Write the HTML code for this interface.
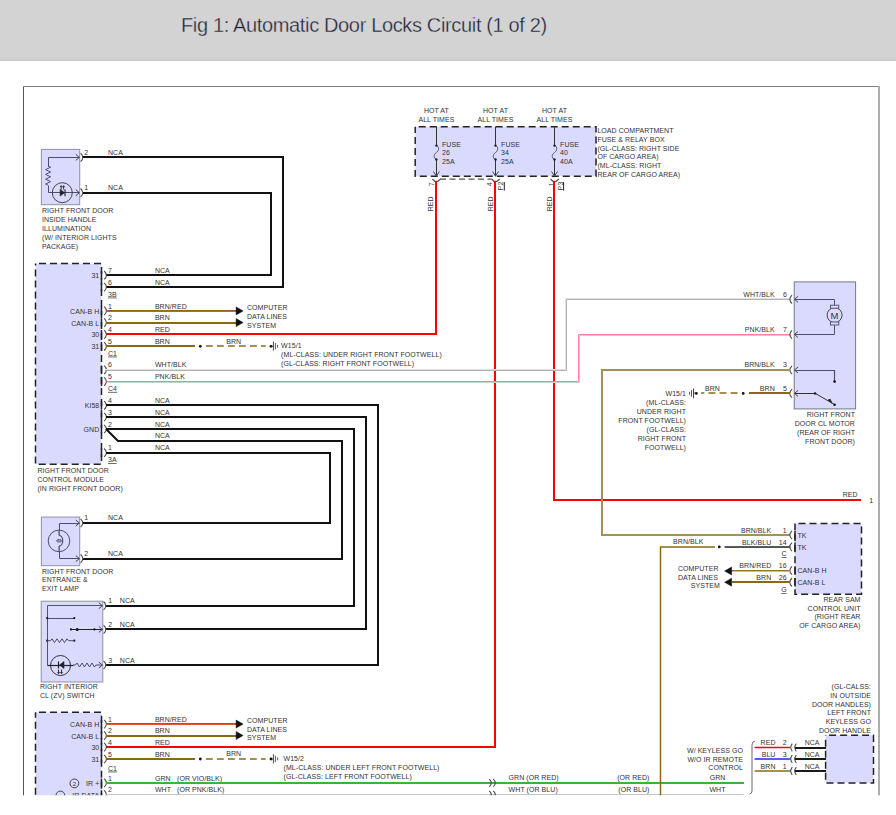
<!DOCTYPE html>
<html><head><meta charset="utf-8"><style>
html,body{margin:0;padding:0;background:#fff;width:896px;height:815px;overflow:hidden}
#hdr{position:absolute;left:0;top:0;width:896px;height:60.5px;background:#d3d3d3}
#ttl{position:absolute;left:181px;top:11px;font-family:"Liberation Sans",sans-serif;font-size:20px;letter-spacing:-0.35px;color:#22223a;-webkit-text-stroke:0.35px #d3d3d3;white-space:nowrap;line-height:28px}
svg{position:absolute;left:0;top:0}
svg text{font-family:"Liberation Sans",sans-serif;letter-spacing:0.06px}
</style></head><body>
<div id="hdr"></div><div style="position:absolute;left:0;top:57px;width:896px;height:1px;background:#cfcfcf"></div><div style="position:absolute;left:0;top:59px;width:896px;height:1.5px;background:#cbcbcb"></div>
<div id="ttl">Fig 1: Automatic Door Locks Circuit (1 of 2)</div>
<svg width="896" height="815" viewBox="0 0 896 815">
<path d="M23.5,800.5 L23.5,86.5" stroke="#555" stroke-width="1" fill="none"/>
<path d="M23.5,86.5 L879.5,86.5" stroke="#808080" stroke-width="1" fill="none"/>
<path d="M879,86 L879,800" stroke="#adadad" stroke-width="2" fill="none"/>
<rect x="415.2" y="126.8" width="180.8" height="49.5" fill="#dadaff" stroke="#222" stroke-width="1.5" stroke-dasharray="7 4" stroke-dashoffset="7.5"/>
<text x="436.4" y="113" text-anchor="middle" font-size="7" fill="#333333">HOT AT</text>
<text x="436.4" y="121.9" text-anchor="middle" font-size="7" fill="#333333">ALL TIMES</text>
<path d="M436.5,126.5 L436.5,145.5" stroke="#333" stroke-width="1" fill="none"/>
<path d="M436.4,145.6 C439.4,146.6 439.4,150.6 436.4,152.5 C433.4,154.4 433.4,158.4 436.4,159.4" stroke="#555" stroke-width="1" fill="none"/>
<path d="M436.5,159.5 L436.5,176.5" stroke="#333" stroke-width="1" fill="none"/>
<circle cx="436.4" cy="145.6" r="1.2" fill="#222"/>
<circle cx="436.4" cy="159.4" r="1.2" fill="#222"/>
<path d="M433.4,171.5 L436.4,176 L439.4,171.5" stroke="#444" stroke-width="1" fill="none"/>
<text x="442" y="147" font-size="7" fill="#333333">FUSE</text>
<text x="442" y="155.4" font-size="7" fill="#333333">26</text>
<text x="442" y="163.8" font-size="7" fill="#333333">25A</text>
<text x="495.5" y="113" text-anchor="middle" font-size="7" fill="#333333">HOT AT</text>
<text x="495.5" y="121.9" text-anchor="middle" font-size="7" fill="#333333">ALL TIMES</text>
<path d="M495.5,126.5 L495.5,145.5" stroke="#333" stroke-width="1" fill="none"/>
<path d="M495.5,145.6 C498.5,146.6 498.5,150.6 495.5,152.5 C492.5,154.4 492.5,158.4 495.5,159.4" stroke="#555" stroke-width="1" fill="none"/>
<path d="M495.5,159.5 L495.5,176.5" stroke="#333" stroke-width="1" fill="none"/>
<circle cx="495.5" cy="145.6" r="1.2" fill="#222"/>
<circle cx="495.5" cy="159.4" r="1.2" fill="#222"/>
<path d="M492.5,171.5 L495.5,176 L498.5,171.5" stroke="#444" stroke-width="1" fill="none"/>
<text x="501.1" y="147" font-size="7" fill="#333333">FUSE</text>
<text x="501.1" y="155.4" font-size="7" fill="#333333">34</text>
<text x="501.1" y="163.8" font-size="7" fill="#333333">25A</text>
<text x="554.5" y="113" text-anchor="middle" font-size="7" fill="#333333">HOT AT</text>
<text x="554.5" y="121.9" text-anchor="middle" font-size="7" fill="#333333">ALL TIMES</text>
<path d="M554.5,126.5 L554.5,145.5" stroke="#333" stroke-width="1" fill="none"/>
<path d="M554.5,145.6 C557.5,146.6 557.5,150.6 554.5,152.5 C551.5,154.4 551.5,158.4 554.5,159.4" stroke="#555" stroke-width="1" fill="none"/>
<path d="M554.5,159.5 L554.5,176.5" stroke="#333" stroke-width="1" fill="none"/>
<circle cx="554.5" cy="145.6" r="1.2" fill="#222"/>
<circle cx="554.5" cy="159.4" r="1.2" fill="#222"/>
<path d="M551.5,171.5 L554.5,176 L557.5,171.5" stroke="#444" stroke-width="1" fill="none"/>
<text x="560.1" y="147" font-size="7" fill="#333333">FUSE</text>
<text x="560.1" y="155.4" font-size="7" fill="#333333">40</text>
<text x="560.1" y="163.8" font-size="7" fill="#333333">40A</text>
<text x="597.4" y="133" font-size="7" fill="#333333">LOAD COMPARTMENT</text>
<text x="597.4" y="141.75" font-size="7" fill="#333333">FUSE &amp; RELAY BOX</text>
<text x="597.4" y="150.5" font-size="7" fill="#333333">(GL-CLASS: RIGHT SIDE</text>
<text x="597.4" y="159.25" font-size="7" fill="#333333">OF CARGO AREA)</text>
<text x="597.4" y="168" font-size="7" fill="#333333">(ML-CLASS: RIGHT</text>
<text x="597.4" y="176.75" font-size="7" fill="#333333">REAR OF CARGO AREA)</text>
<path d="M432.4,179 L434.9,181.3 L437.9,181.3 L440.7,179" stroke="#555" stroke-width="1.2" fill="none"/>
<path d="M491.5,179 L494.0,181.3 L497.0,181.3 L499.8,179" stroke="#555" stroke-width="1.2" fill="none"/>
<path d="M550.5,179 L553.0,181.3 L556.0,181.3 L558.8,179" stroke="#555" stroke-width="1.2" fill="none"/>
<path d="M440,179.1 L491.5,179.1" stroke="#555" stroke-width="1.4" fill="none" stroke-dasharray="6 3.5"/>
<text x="0" y="0" text-anchor="middle" font-size="7" fill="#333333" transform="translate(434.09999999999997,184.2) rotate(-90)">7</text>
<text x="0" y="0" text-anchor="middle" font-size="7" fill="#333333" transform="translate(491.9,184.2) rotate(-90)">4</text>
<text x="0" y="0" text-anchor="middle" font-size="7" fill="#333333" transform="translate(553.5,184.2) rotate(-90)">1</text>
<text x="0" y="0" text-anchor="middle" font-size="7" fill="#333333" transform="translate(433.2,203.8) rotate(-90)">RED</text>
<text x="0" y="0" text-anchor="middle" font-size="7" fill="#333333" transform="translate(492.5,203.8) rotate(-90)">RED</text>
<text x="0" y="0" text-anchor="middle" font-size="7" fill="#333333" transform="translate(551.6,203.8) rotate(-90)">RED</text>
<text x="0" y="0" text-anchor="middle" font-size="7" fill="#333333" transform="translate(503.4,185.8) rotate(-90)">P2</text>
<path d="M504.3,182 L504.3,190.6" stroke="#222" stroke-width="1" fill="none"/>
<text x="0" y="0" text-anchor="middle" font-size="7" fill="#333333" transform="translate(562.6999999999999,185.8) rotate(-90)">P3</text>
<path d="M563.6,182 L563.6,190.6" stroke="#222" stroke-width="1" fill="none"/>
<path d="M436,181 L436,334 L106,334" stroke="#ff0000" stroke-width="2" fill="none"/>
<path d="M495,181 L495,747 L106,747" stroke="#ff0000" stroke-width="2" fill="none"/>
<path d="M554,181 L554,500 L861,500" stroke="#ff0000" stroke-width="2" fill="none"/>
<text x="857.6" y="497.3" text-anchor="end" font-size="7" fill="#333333">RED</text>
<text x="869.2" y="502.8" font-size="7" fill="#333333">1</text>
<rect x="41.4" y="149.4" width="38.3" height="55.3" fill="#dadaff" stroke="#9090a8" stroke-width="1"/>
<path d="M79.5,157.5 L48.5,157.5 L48.5,166.5" stroke="#4d4d70" stroke-width="1" fill="none"/>
<path d="M48,166 L50.6,167.2 L45.6,169.6 L50.6,172.0 L45.6,174.4 L50.6,176.8 L45.6,179.2 L50.6,181.6 L45.6,184.0 L48,185.2" stroke="#4d4d70" stroke-width="1" fill="none"/>
<path d="M48.5,185.5 L48.5,192.5 L79.5,192.5" stroke="#4d4d70" stroke-width="1" fill="none"/>
<path d="M75.8,154.4 L79.3,157.4 L75.8,160.4" stroke="#444" stroke-width="1" fill="none"/>
<path d="M75.8,189.7 L79.3,192.7 L75.8,195.7" stroke="#444" stroke-width="1" fill="none"/>
<circle cx="62.3" cy="192.7" r="10" fill="none" stroke="#444" stroke-width="1"/>
<path d="M60.1,189.3 L60.1,196.1 L64.6,192.7 Z" stroke="#222" stroke-width="0.6" fill="#222"/>
<path d="M65,189.2 L65,196.2" stroke="#222" stroke-width="1.1" fill="none"/>
<path d="M61.2,189.5 L61.2,185.8" stroke="#222" stroke-width="0.9" fill="none"/>
<path d="M63.6,189.5 L63.6,185.8" stroke="#222" stroke-width="0.9" fill="none"/>
<path d="M60.1,187.2 L61.2,185.6 L62.3,187.2 M62.5,187.2 L63.6,185.6 L64.7,187.2" stroke="#222" stroke-width="0.8" fill="none"/>
<path d="M80.6,153.2 Q85,157.4 80.6,161.6" stroke="#4a4a4a" stroke-width="1.1" fill="none"/>
<path d="M80.6,188.5 Q85,192.7 80.6,196.9" stroke="#4a4a4a" stroke-width="1.1" fill="none"/>
<text x="84.2" y="154.6" font-size="7" fill="#333333">2</text>
<text x="84.2" y="189.9" font-size="7" fill="#333333">1</text>
<text x="108" y="154.6" font-size="7" fill="#333333">NCA</text>
<text x="108" y="189.9" font-size="7" fill="#333333">NCA</text>
<path d="M83,157 L283,157 L283,287 L106,287" stroke="#111111" stroke-width="2" fill="none"/>
<path d="M83,193 L271,193 L271,275 L106,275" stroke="#111111" stroke-width="2" fill="none"/>
<text x="42" y="212.8" font-size="7" fill="#333333">RIGHT FRONT DOOR</text>
<text x="42" y="221.8" font-size="7" fill="#333333">INSIDE HANDLE</text>
<text x="42" y="230.8" font-size="7" fill="#333333">ILLUMINATION</text>
<text x="42" y="239.8" font-size="7" fill="#333333">(W/ INTERIOR LIGHTS</text>
<text x="42" y="248.8" font-size="7" fill="#333333">PACKAGE)</text>
<rect x="35.5" y="263.5" width="66" height="200.7" fill="#dadaff" stroke="#222" stroke-width="1.5" stroke-dasharray="7 4" stroke-dashoffset="7.5"/>
<text x="37.4" y="473" font-size="7" fill="#333333">RIGHT FRONT DOOR</text>
<text x="37.4" y="482" font-size="7" fill="#333333">CONTROL MODULE</text>
<text x="37.4" y="491" font-size="7" fill="#333333">(IN RIGHT FRONT DOOR)</text>
<path d="M104.2,271 Q108.6,275.2 104.2,279.4" stroke="#4a4a4a" stroke-width="1.1" fill="none"/>
<path d="M101.5,270.9 L101.5,279.5" stroke="#222" stroke-width="1.5" fill="none"/>
<text x="108" y="272.8" font-size="7" fill="#333333">7</text>
<text x="154.9" y="272.8" font-size="7" fill="#333333">NCA</text>
<text x="99.3" y="278.2" text-anchor="end" font-size="7" fill="#333333">31</text>
<path d="M104.2,282.9 Q108.6,287.1 104.2,291.3" stroke="#4a4a4a" stroke-width="1.1" fill="none"/>
<path d="M101.5,282.8 L101.5,291.4" stroke="#222" stroke-width="1.5" fill="none"/>
<text x="108" y="284.7" font-size="7" fill="#333333">6</text>
<text x="154.9" y="284.7" font-size="7" fill="#333333">NCA</text>
<path d="M104.2,306.7 Q108.6,310.9 104.2,315.1" stroke="#4a4a4a" stroke-width="1.1" fill="none"/>
<path d="M101.5,306.6 L101.5,315.2" stroke="#222" stroke-width="1.5" fill="none"/>
<text x="108" y="308.5" font-size="7" fill="#333333">1</text>
<text x="154.9" y="308.5" font-size="7" fill="#333333">BRN/RED</text>
<text x="99.3" y="313.9" text-anchor="end" font-size="7" fill="#333333">CAN-B H</text>
<path d="M104.2,318.4 Q108.6,322.6 104.2,326.8" stroke="#4a4a4a" stroke-width="1.1" fill="none"/>
<path d="M101.5,318.3 L101.5,326.9" stroke="#222" stroke-width="1.5" fill="none"/>
<text x="108" y="320.2" font-size="7" fill="#333333">2</text>
<text x="154.9" y="320.2" font-size="7" fill="#333333">BRN</text>
<text x="99.3" y="325.6" text-anchor="end" font-size="7" fill="#333333">CAN-B L</text>
<path d="M104.2,330.2 Q108.6,334.4 104.2,338.6" stroke="#4a4a4a" stroke-width="1.1" fill="none"/>
<path d="M101.5,330.1 L101.5,338.7" stroke="#222" stroke-width="1.5" fill="none"/>
<text x="108" y="332" font-size="7" fill="#333333">4</text>
<text x="154.9" y="332" font-size="7" fill="#333333">RED</text>
<text x="99.3" y="337.4" text-anchor="end" font-size="7" fill="#333333">30</text>
<path d="M104.2,342.1 Q108.6,346.3 104.2,350.5" stroke="#4a4a4a" stroke-width="1.1" fill="none"/>
<path d="M101.5,342 L101.5,350.6" stroke="#222" stroke-width="1.5" fill="none"/>
<text x="108" y="343.9" font-size="7" fill="#333333">5</text>
<text x="154.9" y="343.9" font-size="7" fill="#333333">BRN</text>
<text x="99.3" y="349.3" text-anchor="end" font-size="7" fill="#333333">31</text>
<path d="M104.2,365.6 Q108.6,369.8 104.2,374" stroke="#4a4a4a" stroke-width="1.1" fill="none"/>
<path d="M101.5,365.5 L101.5,374.1" stroke="#222" stroke-width="1.5" fill="none"/>
<text x="108" y="367.4" font-size="7" fill="#333333">6</text>
<text x="154.9" y="367.4" font-size="7" fill="#333333">WHT/BLK</text>
<path d="M104.2,377.4 Q108.6,381.6 104.2,385.8" stroke="#4a4a4a" stroke-width="1.1" fill="none"/>
<path d="M101.5,377.3 L101.5,385.9" stroke="#222" stroke-width="1.5" fill="none"/>
<text x="108" y="379.2" font-size="7" fill="#333333">5</text>
<text x="154.9" y="379.2" font-size="7" fill="#333333">PNK/BLK</text>
<path d="M104.2,401.1 Q108.6,405.3 104.2,409.5" stroke="#4a4a4a" stroke-width="1.1" fill="none"/>
<path d="M101.5,401 L101.5,409.6" stroke="#222" stroke-width="1.5" fill="none"/>
<text x="108" y="402.9" font-size="7" fill="#333333">4</text>
<text x="154.9" y="402.9" font-size="7" fill="#333333">NCA</text>
<text x="99.3" y="408.3" text-anchor="end" font-size="7" fill="#333333">KI58</text>
<path d="M104.2,412.8 Q108.6,417 104.2,421.2" stroke="#4a4a4a" stroke-width="1.1" fill="none"/>
<path d="M101.5,412.7 L101.5,421.3" stroke="#222" stroke-width="1.5" fill="none"/>
<text x="108" y="414.6" font-size="7" fill="#333333">3</text>
<text x="154.9" y="414.6" font-size="7" fill="#333333">NCA</text>
<path d="M104.2,424.8 Q108.6,429 104.2,433.2" stroke="#4a4a4a" stroke-width="1.1" fill="none"/>
<path d="M101.5,424.7 L101.5,433.3" stroke="#222" stroke-width="1.5" fill="none"/>
<text x="108" y="426.6" font-size="7" fill="#333333">2</text>
<text x="154.9" y="426.6" font-size="7" fill="#333333">NCA</text>
<text x="99.3" y="432" text-anchor="end" font-size="7" fill="#333333">GND</text>
<text x="154.9" y="438.4" font-size="7" fill="#333333">NCA</text>
<path d="M104.2,448.5 Q108.6,452.7 104.2,456.9" stroke="#4a4a4a" stroke-width="1.1" fill="none"/>
<path d="M101.5,448.4 L101.5,457" stroke="#222" stroke-width="1.5" fill="none"/>
<text x="108" y="450.3" font-size="7" fill="#333333">1</text>
<text x="154.9" y="450.3" font-size="7" fill="#333333">NCA</text>
<text x="108" y="296.6" font-size="7" fill="#333333" text-decoration="underline">3B</text>
<text x="108" y="355.6" font-size="7" fill="#333333" text-decoration="underline">C1</text>
<text x="108" y="390.9" font-size="7" fill="#333333" text-decoration="underline">C4</text>
<text x="108" y="462.1" font-size="7" fill="#333333" text-decoration="underline">3A</text>
<rect x="106.5" y="310" width="130.5" height="1" fill="#8b6914"/>
<rect x="106.5" y="311" width="130.5" height="1" fill="#e8502a"/>
<path d="M236.1,306.9 L243.1,310.9 L236.1,314.9 Z" stroke="#111111" stroke-width="0.5" fill="#111111"/>
<path d="M106,323 L237,323" stroke="#8b6914" stroke-width="2" fill="none"/>
<path d="M236.1,318.6 L243.1,322.6 L236.1,326.6 Z" stroke="#111111" stroke-width="0.5" fill="#111111"/>
<text x="247" y="309.6" font-size="7" fill="#333333">COMPUTER</text>
<text x="247" y="318.7" font-size="7" fill="#333333">DATA LINES</text>
<text x="247" y="327.8" font-size="7" fill="#333333">SYSTEM</text>
<path d="M106,346 L195,346" stroke="#8b6914" stroke-width="2" fill="none"/>
<circle cx="200.3" cy="346.3" r="1.4" fill="#111111"/>
<path d="M206,346 L265.7,346" stroke="#8b6914" stroke-width="1.6" fill="none" stroke-dasharray="6.8 4.2"/>
<circle cx="271" cy="346.3" r="1.4" fill="#111111"/>
<path d="M271,346.3 L273.4,346.3" stroke="#333" stroke-width="0.8" fill="none"/>
<path d="M273.4,341.6 L273.4,350.7" stroke="#333" stroke-width="0.9" fill="none"/>
<path d="M275.4,343 L275.4,349.4" stroke="#444" stroke-width="0.9" fill="none"/>
<path d="M277.6,344.8 L277.6,347.6" stroke="#444" stroke-width="0.9" fill="none"/>
<text x="226.2" y="343.7" font-size="7" fill="#333333">BRN</text>
<text x="281.1" y="348.4" font-size="7" fill="#333333">W15/1</text>
<text x="281.1" y="357.4" font-size="7" fill="#333333">(ML-CLASS: UNDER RIGHT FRONT FOOTWELL)</text>
<text x="281.1" y="366.4" font-size="7" fill="#333333">(GL-CLASS: RIGHT FRONT FOOTWELL)</text>
<path d="M105.5,369.5 L565.5,369.5 L565.5,298.5 L789.5,298.5" stroke="#dedede" stroke-width="1" fill="none"/>
<path d="M106.5,370.5 L566.5,370.5 L566.5,299.5 L790.5,299.5" stroke="#b2b2b2" stroke-width="1" fill="none"/>
<path d="M107.5,382.5 L579.5,382.5 L579.5,335.5 L791.5,335.5" stroke="#c9d3cd" stroke-width="1" fill="none"/>
<path d="M106.5,381.5 L578.5,381.5 L578.5,334.5 L790.5,334.5" stroke="#ff7fa0" stroke-width="1" fill="none"/>
<path d="M106,405 L378,405 L378,665 L106,665" stroke="#111111" stroke-width="2" fill="none"/>
<path d="M106,417 L366,417 L366,629 L106,629" stroke="#111111" stroke-width="2" fill="none"/>
<path d="M106,429 L354,429 L354,606 L106,606" stroke="#111111" stroke-width="2" fill="none"/>
<path d="M106,429 L118,441 L342,441 L342,559 L83,559" stroke="#111111" stroke-width="2" fill="none"/>
<path d="M106,453 L330,453 L330,523 L83,523" stroke="#111111" stroke-width="2" fill="none"/>
<rect x="41.4" y="517.1" width="38.3" height="48.6" fill="#dadaff" stroke="#9090a8" stroke-width="1"/>
<path d="M79.5,523.5 L59.5,523.5 L59.5,530.5" stroke="#4d4d70" stroke-width="1" fill="none"/>
<path d="M59.5,551.5 L59.5,558.5 L79.5,558.5" stroke="#4d4d70" stroke-width="1" fill="none"/>
<path d="M59.1,530.2 L59.1,535.3" stroke="#4d4d70" stroke-width="1.3" fill="none"/>
<path d="M59.1,535.3 A3.6,5.4 0 0 1 59.1,546.1" stroke="#4d4d70" stroke-width="1.2" fill="none"/>
<path d="M59.1,546.1 L59.1,551.2" stroke="#4d4d70" stroke-width="1.3" fill="none"/>
<circle cx="59" cy="540.9" r="10.8" fill="none" stroke="#4d4d70" stroke-width="1"/>
<ellipse cx="59.1" cy="540.8" rx="2.6" ry="1.3" fill="#9a9ab0" stroke="#55557a" stroke-width="0.8"/>
<path d="M75.8,520 L79.3,523 L75.8,526" stroke="#444" stroke-width="1" fill="none"/>
<path d="M75.8,555.6 L79.3,558.6 L75.8,561.6" stroke="#444" stroke-width="1" fill="none"/>
<path d="M80.6,518.8 Q85,523 80.6,527.2" stroke="#4a4a4a" stroke-width="1.1" fill="none"/>
<path d="M80.6,554.4 Q85,558.6 80.6,562.8" stroke="#4a4a4a" stroke-width="1.1" fill="none"/>
<text x="84.2" y="520.3" font-size="7" fill="#333333">1</text>
<text x="84.2" y="555.9" font-size="7" fill="#333333">2</text>
<text x="108" y="520.3" font-size="7" fill="#333333">NCA</text>
<text x="108" y="555.9" font-size="7" fill="#333333">NCA</text>
<text x="42" y="573.8" font-size="7" fill="#333333">RIGHT FRONT DOOR</text>
<text x="42" y="582.4" font-size="7" fill="#333333">ENTRANCE &amp;</text>
<text x="42" y="591" font-size="7" fill="#333333">EXIT LAMP</text>
<rect x="41.2" y="601.2" width="61.6" height="80.8" fill="#dadaff" stroke="#9090a8" stroke-width="1"/>
<path d="M102.5,605.5 L47.5,605.5 L47.5,665.5" stroke="#555" stroke-width="1" fill="none"/>
<path d="M98.8,602.7 L102.3,605.7 L98.8,608.7" stroke="#444" stroke-width="1" fill="none"/>
<path d="M47.5,618.5 L74.5,618.5" stroke="#4d4d70" stroke-width="1" fill="none"/>
<circle cx="47.2" cy="618.1" r="1.1" fill="#111111"/>
<circle cx="74.3" cy="618.1" r="1.1" fill="#111111"/>
<path d="M71.5,629.5 L102.5,629.5" stroke="#222" stroke-width="1" fill="none"/>
<circle cx="71" cy="629.4" r="1.1" fill="#111111"/>
<circle cx="77.2" cy="629.4" r="1.5" fill="#111111"/>
<circle cx="94.4" cy="629.4" r="1.1" fill="#111111"/>
<path d="M98.8,626.4 L102.3,629.4 L98.8,632.4" stroke="#444" stroke-width="1" fill="none"/>
<circle cx="47.2" cy="640.7" r="1.1" fill="#111111"/>
<circle cx="74.3" cy="640.7" r="1.1" fill="#111111"/>
<path d="M47.2,640.7 L50.6,640.7 L52,638.8 L54.5,642.6 L57,638.8 L59.5,642.6 L62,638.8 L64.5,642.6 L67,638.8 L68.5,640.7 L74.3,640.7" stroke="#4d4d70" stroke-width="1" fill="none"/>
<circle cx="60.5" cy="665.5" r="10" fill="none" stroke="#333" stroke-width="1"/>
<path d="M47.5,665.5 L73.5,665.5" stroke="#222" stroke-width="1.2" fill="none"/>
<path d="M59.5,665 L64,661.5 L64,668.5 Z" stroke="#222" stroke-width="0.6" fill="#222"/>
<path d="M58.5,661.5 L58.5,668.5" stroke="#222" stroke-width="1.2" fill="none"/>
<path d="M58.5,669.5 L58.5,673.5" stroke="#222" stroke-width="0.9" fill="none"/>
<path d="M61.5,669.5 L61.5,673.5" stroke="#222" stroke-width="0.9" fill="none"/>
<path d="M57.4,672 L58.6,673.6 L59.8,672 M60.3,672 L61.5,673.6 L62.7,672" stroke="#222" stroke-width="0.8" fill="none"/>
<path d="M73,665 L75.5,665 L77,663 L79.5,667 L82,663 L84.5,667 L87,663 L89.5,667 L92,663 L94.5,667 L96,665 L102.3,665" stroke="#4d4d70" stroke-width="1" fill="none"/>
<path d="M98.8,662 L102.3,665 L98.8,668" stroke="#444" stroke-width="1" fill="none"/>
<path d="M103.6,601.5 Q108,605.7 103.6,609.9" stroke="#4a4a4a" stroke-width="1.1" fill="none"/>
<text x="108.2" y="603.3" font-size="7" fill="#333333">1</text>
<text x="119.8" y="603.3" font-size="7" fill="#333333">NCA</text>
<path d="M103.6,625.2 Q108,629.4 103.6,633.6" stroke="#4a4a4a" stroke-width="1.1" fill="none"/>
<text x="108.2" y="627" font-size="7" fill="#333333">2</text>
<text x="119.8" y="627" font-size="7" fill="#333333">NCA</text>
<path d="M103.6,660.8 Q108,665 103.6,669.2" stroke="#4a4a4a" stroke-width="1.1" fill="none"/>
<text x="108.2" y="662.6" font-size="7" fill="#333333">3</text>
<text x="119.8" y="662.6" font-size="7" fill="#333333">NCA</text>
<text x="40" y="688.8" font-size="7" fill="#333333">RIGHT INTERIOR</text>
<text x="40" y="698" font-size="7" fill="#333333">CL (ZV) SWITCH</text>
<rect x="35.5" y="712.3" width="66" height="120" fill="#dadaff" stroke="#222" stroke-width="1.5" stroke-dasharray="7 4" stroke-dashoffset="7.5"/>
<path d="M104.2,719.9 Q108.6,724.1 104.2,728.3" stroke="#4a4a4a" stroke-width="1.1" fill="none"/>
<path d="M101.5,719.8 L101.5,728.4" stroke="#222" stroke-width="1.5" fill="none"/>
<text x="108" y="721.7" font-size="7" fill="#333333">1</text>
<text x="154.9" y="721.7" font-size="7" fill="#333333">BRN/RED</text>
<text x="99.3" y="727.1" text-anchor="end" font-size="7" fill="#333333">CAN-B H</text>
<path d="M104.2,731.3 Q108.6,735.5 104.2,739.7" stroke="#4a4a4a" stroke-width="1.1" fill="none"/>
<path d="M101.5,731.2 L101.5,739.8" stroke="#222" stroke-width="1.5" fill="none"/>
<text x="108" y="733.1" font-size="7" fill="#333333">2</text>
<text x="154.9" y="733.1" font-size="7" fill="#333333">BRN</text>
<text x="99.3" y="738.5" text-anchor="end" font-size="7" fill="#333333">CAN-B L</text>
<path d="M104.2,742.9 Q108.6,747.1 104.2,751.3" stroke="#4a4a4a" stroke-width="1.1" fill="none"/>
<path d="M101.5,742.8 L101.5,751.4" stroke="#222" stroke-width="1.5" fill="none"/>
<text x="108" y="744.7" font-size="7" fill="#333333">4</text>
<text x="154.9" y="744.7" font-size="7" fill="#333333">RED</text>
<text x="99.3" y="750.1" text-anchor="end" font-size="7" fill="#333333">30</text>
<path d="M104.2,754.8 Q108.6,759 104.2,763.2" stroke="#4a4a4a" stroke-width="1.1" fill="none"/>
<path d="M101.5,754.7 L101.5,763.3" stroke="#222" stroke-width="1.5" fill="none"/>
<text x="108" y="756.6" font-size="7" fill="#333333">5</text>
<text x="154.9" y="756.6" font-size="7" fill="#333333">BRN</text>
<text x="99.3" y="762" text-anchor="end" font-size="7" fill="#333333">31</text>
<path d="M104.2,778.7 Q108.6,782.9 104.2,787.1" stroke="#4a4a4a" stroke-width="1.1" fill="none"/>
<path d="M101.5,778.6 L101.5,787.2" stroke="#222" stroke-width="1.5" fill="none"/>
<text x="108" y="780.5" font-size="7" fill="#333333">1</text>
<text x="154.9" y="780.5" font-size="7" fill="#333333">GRN</text>
<text x="99.3" y="785.9" text-anchor="end" font-size="7" fill="#333333">IR +</text>
<path d="M104.2,790.4 Q108.6,794.6 104.2,798.8" stroke="#4a4a4a" stroke-width="1.1" fill="none"/>
<path d="M101.5,790.3 L101.5,798.9" stroke="#222" stroke-width="1.5" fill="none"/>
<text x="108" y="792.2" font-size="7" fill="#333333">2</text>
<text x="154.9" y="792.2" font-size="7" fill="#333333">WHT</text>
<text x="99.3" y="797.6" text-anchor="end" font-size="7" fill="#333333">IR DATA</text>
<text x="108" y="770.6" font-size="7" fill="#333333" text-decoration="underline">C1</text>
<text x="177" y="780.5" font-size="7" fill="#333333">(OR VIO/BLK)</text>
<text x="177" y="792.2" font-size="7" fill="#333333">(OR PNK/BLK)</text>
<circle cx="74.4" cy="783.4" r="4.4" fill="none" stroke="#333" stroke-width="0.9"/>
<text x="74.4" y="785.6" text-anchor="middle" font-size="6" fill="#333333">2</text>
<circle cx="60.4" cy="795.5" r="4.4" fill="none" stroke="#333" stroke-width="0.9"/>
<rect x="106.5" y="723" width="130.5" height="1" fill="#8b6914"/>
<rect x="106.5" y="724" width="130.5" height="1" fill="#e8502a"/>
<path d="M236.1,720.1 L243.1,724.1 L236.1,728.1 Z" stroke="#111111" stroke-width="0.5" fill="#111111"/>
<path d="M106,736 L237,736" stroke="#8b6914" stroke-width="2" fill="none"/>
<path d="M236.1,731.5 L243.1,735.5 L236.1,739.5 Z" stroke="#111111" stroke-width="0.5" fill="#111111"/>
<text x="247" y="722.6" font-size="7" fill="#333333">COMPUTER</text>
<text x="247" y="731.5" font-size="7" fill="#333333">DATA LINES</text>
<text x="247" y="740.4" font-size="7" fill="#333333">SYSTEM</text>
<path d="M106,759 L195,759" stroke="#8b6914" stroke-width="2" fill="none"/>
<circle cx="200.3" cy="759" r="1.4" fill="#111111"/>
<path d="M206,759 L265.7,759" stroke="#8b6914" stroke-width="1.6" fill="none" stroke-dasharray="6.8 4.2"/>
<circle cx="271" cy="759" r="1.4" fill="#111111"/>
<path d="M271,759 L273.4,759" stroke="#333" stroke-width="0.8" fill="none"/>
<path d="M273.4,754.3 L273.4,763.4" stroke="#333" stroke-width="0.9" fill="none"/>
<path d="M275.4,755.7 L275.4,762.1" stroke="#444" stroke-width="0.9" fill="none"/>
<path d="M277.6,757.5 L277.6,760.3" stroke="#444" stroke-width="0.9" fill="none"/>
<text x="226.2" y="756.4" font-size="7" fill="#333333">BRN</text>
<text x="283.5" y="760.8" font-size="7" fill="#333333">W15/2</text>
<text x="283.5" y="769.8" font-size="7" fill="#333333">(ML-CLASS: UNDER LEFT FRONT FOOTWELL)</text>
<text x="283.5" y="778.8" font-size="7" fill="#333333">(GL-CLASS: LEFT FRONT FOOTWELL)</text>
<path d="M106,783 L744,783" stroke="#3db23a" stroke-width="2" fill="none"/>
<path d="M106.5,794.6 L743.7,794.6" stroke="#c8c8c8" stroke-width="1.4" fill="none"/>
<path d="M489.3,779.1 Q493.3,782.9 489.3,786.6999999999999" stroke="#4a4a4a" stroke-width="1.1" fill="none"/>
<path d="M493.3,779.1 Q497.3,782.9 493.3,786.6999999999999" stroke="#4a4a4a" stroke-width="1.1" fill="none"/>
<path d="M489.3,790.8000000000001 Q493.3,794.6 489.3,798.4" stroke="#4a4a4a" stroke-width="1.1" fill="none"/>
<path d="M493.3,790.8000000000001 Q497.3,794.6 493.3,798.4" stroke="#4a4a4a" stroke-width="1.1" fill="none"/>
<text x="508.6" y="780.3" font-size="7" fill="#333333">GRN (OR RED)</text>
<text x="508.6" y="792.2" font-size="7" fill="#333333">WHT (OR BLU)</text>
<text x="649.5" y="780.3" text-anchor="end" font-size="7" fill="#333333">(OR RED)</text>
<text x="649.5" y="792.2" text-anchor="end" font-size="7" fill="#333333">(OR BLU)</text>
<text x="717.5" y="780.3" text-anchor="middle" font-size="7" fill="#333333">GRN</text>
<text x="717.5" y="792.2" text-anchor="middle" font-size="7" fill="#333333">WHT</text>
<rect x="794.2" y="281.9" width="61.4" height="127" fill="#dadaff" stroke="#777788" stroke-width="1"/>
<path d="M792,295.1 Q787.6,299.3 792,303.5" stroke="#4a4a4a" stroke-width="1.1" fill="none"/>
<path d="M798,296.3 L794.5,299.3 L798,302.3" stroke="#444" stroke-width="1" fill="none"/>
<text x="774.8" y="296.7" text-anchor="end" font-size="7" fill="#333333">WHT/BLK</text>
<text x="783" y="296.7" font-size="7" fill="#333333">6</text>
<path d="M792,330.3 Q787.6,334.5 792,338.7" stroke="#4a4a4a" stroke-width="1.1" fill="none"/>
<path d="M798,331.5 L794.5,334.5 L798,337.5" stroke="#444" stroke-width="1" fill="none"/>
<text x="774.8" y="331.9" text-anchor="end" font-size="7" fill="#333333">PNK/BLK</text>
<text x="783" y="331.9" font-size="7" fill="#333333">7</text>
<path d="M792,365.8 Q787.6,370 792,374.2" stroke="#4a4a4a" stroke-width="1.1" fill="none"/>
<path d="M798,367 L794.5,370 L798,373" stroke="#444" stroke-width="1" fill="none"/>
<text x="774.8" y="367.4" text-anchor="end" font-size="7" fill="#333333">BRN/BLK</text>
<text x="783" y="367.4" font-size="7" fill="#333333">3</text>
<path d="M792,389.2 Q787.6,393.4 792,397.6" stroke="#4a4a4a" stroke-width="1.1" fill="none"/>
<path d="M798,390.4 L794.5,393.4 L798,396.4" stroke="#444" stroke-width="1" fill="none"/>
<text x="774.8" y="390.8" text-anchor="end" font-size="7" fill="#333333">BRN</text>
<text x="783" y="390.8" font-size="7" fill="#333333">5</text>
<path d="M794.5,299.5 L834.5,299.5 L834.5,307.5" stroke="#4d4d70" stroke-width="1" fill="none"/>
<path d="M834.5,323.5 L834.5,334.5 L794.5,334.5" stroke="#4d4d70" stroke-width="1" fill="none"/>
<circle cx="834.6" cy="315.1" r="7.5" fill="#dadafd" stroke="#444" stroke-width="1"/>
<rect x="830.4" y="305.2" width="8.4" height="3" fill="#dadafd" stroke="#4d4d70" stroke-width="0.9"/>
<rect x="830.4" y="322" width="8.4" height="3" fill="#dadafd" stroke="#4d4d70" stroke-width="0.9"/>
<text x="834.6" y="318.6" text-anchor="middle" font-size="9.5" fill="#333">M</text>
<path d="M794.5,370.5 L834.5,370.5 L834.5,381.5" stroke="#4d4d70" stroke-width="1.2" fill="none"/>
<circle cx="834.6" cy="381.6" r="1.3" fill="#111111"/>
<path d="M794.5,393.5 L815.5,393.5 L834.5,404.5" stroke="#333" stroke-width="1" fill="none"/>
<circle cx="815.1" cy="393.4" r="1.2" fill="#111111"/>
<circle cx="834.6" cy="404.7" r="1.3" fill="#111111"/>
<path d="M828,400 L832,403.2 L830.2,399.2 Z" stroke="#222" stroke-width="0.8" fill="#222"/>
<text x="855" y="417" text-anchor="end" font-size="7" fill="#333333">RIGHT FRONT</text>
<text x="855" y="425.9" text-anchor="end" font-size="7" fill="#333333">DOOR CL MOTOR</text>
<text x="855" y="434.8" text-anchor="end" font-size="7" fill="#333333">(REAR OF RIGHT</text>
<text x="855" y="443.7" text-anchor="end" font-size="7" fill="#333333">FRONT DOOR)</text>
<path d="M790,370 L602,370 L602,535 L790,535" stroke="#a39258" stroke-width="2" fill="none"/>
<path d="M749,393 L790,393" stroke="#8b6914" stroke-width="2" fill="none"/>
<circle cx="743.2" cy="393.4" r="1.4" fill="#111111"/>
<path d="M737.6,393 L701,393" stroke="#8b6914" stroke-width="1.6" fill="none" stroke-dasharray="7 4.1"/>
<circle cx="696.3" cy="393.4" r="1.4" fill="#111111"/>
<path d="M693.5,393 L696.3,393" stroke="#333" stroke-width="0.8" fill="none"/>
<path d="M693.5,388.5 L693.5,398.3" stroke="#333" stroke-width="0.9" fill="none"/>
<path d="M691.5,390 L691.5,396.5" stroke="#444" stroke-width="0.9" fill="none"/>
<path d="M689.5,391.8 L689.5,394.6" stroke="#444" stroke-width="0.9" fill="none"/>
<text x="705" y="390.7" font-size="7" fill="#333333">BRN</text>
<text x="686" y="396.1" text-anchor="end" font-size="7" fill="#333333">W15/1</text>
<text x="686" y="405.05" text-anchor="end" font-size="7" fill="#333333">(ML-CLASS:</text>
<text x="686" y="414" text-anchor="end" font-size="7" fill="#333333">UNDER RIGHT</text>
<text x="686" y="422.95" text-anchor="end" font-size="7" fill="#333333">FRONT FOOTWELL)</text>
<text x="686" y="431.9" text-anchor="end" font-size="7" fill="#333333">(GL-CLASS:</text>
<text x="686" y="440.85" text-anchor="end" font-size="7" fill="#333333">RIGHT FRONT</text>
<text x="686" y="449.8" text-anchor="end" font-size="7" fill="#333333">FOOTWELL)</text>
<rect x="795" y="523.6" width="66.5" height="70.6" fill="#dadaff" stroke="#222" stroke-width="1.5" stroke-dasharray="7 4" stroke-dashoffset="7.5"/>
<path d="M792,530.8 Q787.6,535 792,539.2" stroke="#4a4a4a" stroke-width="1.1" fill="none"/>
<path d="M795,530.7 L795,539.3" stroke="#222" stroke-width="1.5" fill="none"/>
<text x="771.3" y="532.8" text-anchor="end" font-size="7" fill="#333333">BRN/BLK</text>
<text x="786.7" y="532.8" text-anchor="end" font-size="7" fill="#333333">1</text>
<text x="797.5" y="537.8" font-size="7" fill="#333333">TK</text>
<path d="M792,542.7 Q787.6,546.9 792,551.1" stroke="#4a4a4a" stroke-width="1.1" fill="none"/>
<path d="M795,542.6 L795,551.2" stroke="#222" stroke-width="1.5" fill="none"/>
<text x="771.3" y="544.7" text-anchor="end" font-size="7" fill="#333333">BLK/BLU</text>
<text x="786.7" y="544.7" text-anchor="end" font-size="7" fill="#333333">14</text>
<text x="797.5" y="549.7" font-size="7" fill="#333333">TK</text>
<path d="M792,566.3 Q787.6,570.5 792,574.7" stroke="#4a4a4a" stroke-width="1.1" fill="none"/>
<path d="M795,566.2 L795,574.8" stroke="#222" stroke-width="1.5" fill="none"/>
<text x="771.3" y="568.3" text-anchor="end" font-size="7" fill="#333333">BRN/RED</text>
<text x="786.7" y="568.3" text-anchor="end" font-size="7" fill="#333333">16</text>
<text x="797.5" y="573.3" font-size="7" fill="#333333">CAN-B H</text>
<path d="M792,578 Q787.6,582.2 792,586.4" stroke="#4a4a4a" stroke-width="1.1" fill="none"/>
<path d="M795,577.9 L795,586.5" stroke="#222" stroke-width="1.5" fill="none"/>
<text x="771.3" y="580" text-anchor="end" font-size="7" fill="#333333">BRN</text>
<text x="786.7" y="580" text-anchor="end" font-size="7" fill="#333333">26</text>
<text x="797.5" y="585" font-size="7" fill="#333333">CAN-B L</text>
<text x="786.7" y="556.3" text-anchor="end" font-size="7" fill="#333333" text-decoration="underline">C</text>
<text x="786.7" y="592" text-anchor="end" font-size="7" fill="#333333" text-decoration="underline">G</text>
<path d="M660.5,800 L660.5,546.9 L715,546.9" stroke="#8b6914" stroke-width="1.5" fill="none"/>
<circle cx="719.3" cy="546.9" r="1.4" fill="#111111"/>
<path d="M724.5,547.5 L790.5,547.5" stroke="#4a3ccc" stroke-width="1" fill="none"/>
<path d="M724.5,546.5 L790.5,546.5" stroke="#5a6058" stroke-width="1" fill="none"/>
<text x="703.5" y="544.3" text-anchor="end" font-size="7" fill="#333333">BRN/BLK</text>
<rect x="731.6" y="570" width="58.4" height="1" fill="#96782c"/>
<rect x="731.6" y="571" width="58.4" height="1" fill="#f4a4a4"/>
<path d="M731.6,567 L724.6,571 L731.6,575 Z" stroke="#111111" stroke-width="0.5" fill="#111111"/>
<path d="M732,582 L790,582" stroke="#8b6914" stroke-width="2" fill="none"/>
<path d="M731.6,578.2 L724.6,582.2 L731.6,586.2 Z" stroke="#111111" stroke-width="0.5" fill="#111111"/>
<text x="678" y="570.9" font-size="7" fill="#333333">COMPUTER</text>
<text x="678" y="579.6" font-size="7" fill="#333333">DATA LINES</text>
<text x="720" y="587.8" text-anchor="end" font-size="7" fill="#333333">SYSTEM</text>
<text x="860.5" y="601.7" text-anchor="end" font-size="7" fill="#333333">REAR SAM</text>
<text x="860.5" y="610.5" text-anchor="end" font-size="7" fill="#333333">CONTROL UNIT</text>
<text x="860.5" y="619.3" text-anchor="end" font-size="7" fill="#333333">(RIGHT REAR</text>
<text x="860.5" y="628.1" text-anchor="end" font-size="7" fill="#333333">OF CARGO AREA)</text>
<rect x="825.6" y="735.3" width="47.9" height="47.6" fill="#dadaff" stroke="#222" stroke-width="1.5" stroke-dasharray="7 4" stroke-dashoffset="7.5"/>
<text x="871" y="688.8" text-anchor="end" font-size="7" fill="#333333">(GL-CALSS:</text>
<text x="871" y="697.65" text-anchor="end" font-size="7" fill="#333333">IN OUTSIDE</text>
<text x="871" y="706.5" text-anchor="end" font-size="7" fill="#333333">DOOR HANDLES)</text>
<text x="871" y="715.35" text-anchor="end" font-size="7" fill="#333333">LEFT FRONT</text>
<text x="871" y="724.2" text-anchor="end" font-size="7" fill="#333333">KEYLESS GO</text>
<text x="871" y="733.05" text-anchor="end" font-size="7" fill="#333333">DOOR HANDLE</text>
<path d="M754.6,747.5 L790.2,747.5" stroke="#ff0000" stroke-width="1.6" fill="none"/>
<path d="M792.3,743.7 Q789.1,747.5 792.3,751.3" stroke="#4a4a4a" stroke-width="1.1" fill="none"/>
<path d="M796.3,743.7 Q793.1,747.5 796.3,751.3" stroke="#4a4a4a" stroke-width="1.1" fill="none"/>
<path d="M795,748 L826,748" stroke="#1a1a1a" stroke-width="2" fill="none"/>
<text x="775.5" y="745.1" text-anchor="end" font-size="7" fill="#333333">RED</text>
<text x="786.8" y="745.1" text-anchor="end" font-size="7" fill="#333333">2</text>
<text x="819.6" y="745.1" text-anchor="end" font-size="7" fill="#333333">NCA</text>
<path d="M754.6,759 L790.2,759" stroke="#2020ff" stroke-width="1.6" fill="none"/>
<path d="M792.3,755.2 Q789.1,759 792.3,762.8" stroke="#4a4a4a" stroke-width="1.1" fill="none"/>
<path d="M796.3,755.2 Q793.1,759 796.3,762.8" stroke="#4a4a4a" stroke-width="1.1" fill="none"/>
<path d="M795,759 L826,759" stroke="#1a1a1a" stroke-width="2" fill="none"/>
<text x="775.5" y="756.6" text-anchor="end" font-size="7" fill="#333333">BLU</text>
<text x="786.8" y="756.6" text-anchor="end" font-size="7" fill="#333333">3</text>
<text x="819.6" y="756.6" text-anchor="end" font-size="7" fill="#333333">NCA</text>
<path d="M754.6,771 L790.2,771" stroke="#8b6914" stroke-width="1.6" fill="none"/>
<path d="M792.3,767.2 Q789.1,771 792.3,774.8" stroke="#4a4a4a" stroke-width="1.1" fill="none"/>
<path d="M796.3,767.2 Q793.1,771 796.3,774.8" stroke="#4a4a4a" stroke-width="1.1" fill="none"/>
<path d="M795,771 L826,771" stroke="#1a1a1a" stroke-width="2" fill="none"/>
<text x="775.5" y="768.6" text-anchor="end" font-size="7" fill="#333333">BRN</text>
<text x="786.8" y="768.6" text-anchor="end" font-size="7" fill="#333333">1</text>
<text x="819.6" y="768.6" text-anchor="end" font-size="7" fill="#333333">NCA</text>
<text x="743" y="753.2" text-anchor="end" font-size="7" fill="#333333">W/ KEYLESS GO</text>
<text x="743" y="761.8" text-anchor="end" font-size="7" fill="#333333">W/O IR REMOTE</text>
<text x="743" y="770.4" text-anchor="end" font-size="7" fill="#333333">CONTROL</text>
<path d="M755,741 Q752,741.5 752,745 L752,791 Q752,793.5 749.5,794" stroke="#444" stroke-width="0.8" fill="none"/>
<rect x="0" y="795.3" width="896" height="20" fill="#fff"/>
</svg>
</body></html>
